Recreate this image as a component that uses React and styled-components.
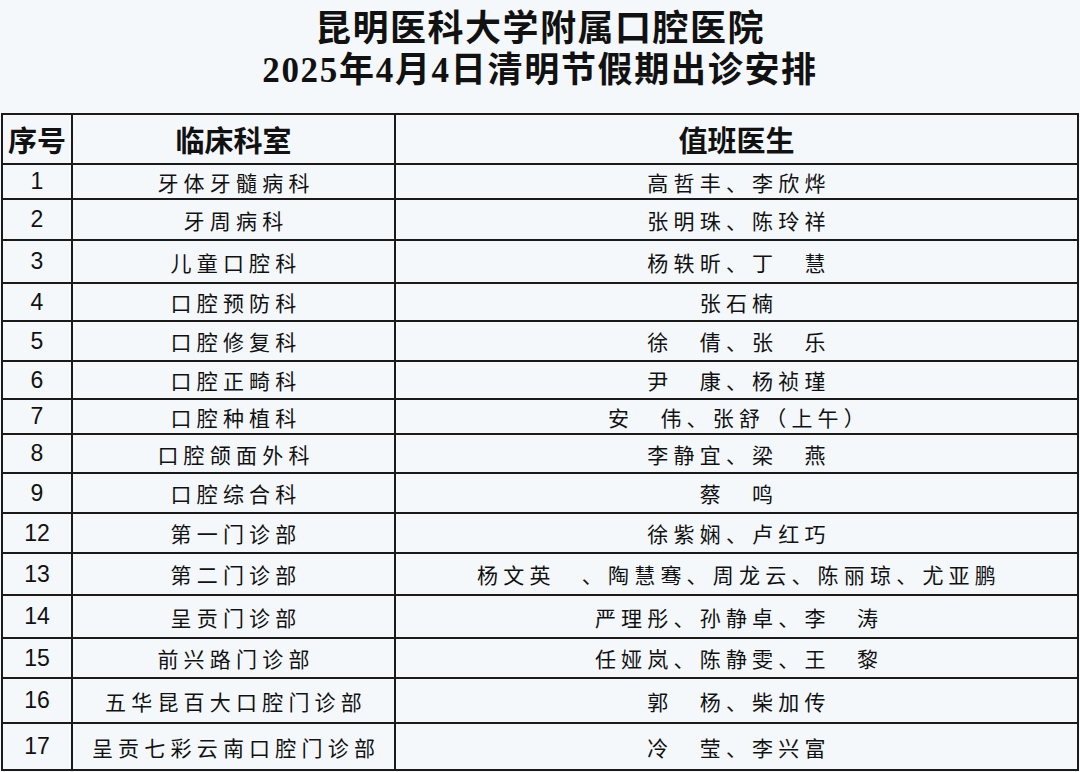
import React from "react";
import styled, { createGlobalStyle } from "styled-components";

const rows = [
  { no: "1", dept: "牙体牙髓病科", doctors: "高哲丰、李欣烨", h: 35 },
  { no: "2", dept: "牙周病科", doctors: "张明珠、陈玲祥", h: 41 },
  { no: "3", dept: "儿童口腔科", doctors: "杨轶昕、丁　慧", h: 43 },
  { no: "4", dept: "口腔预防科", doctors: "张石楠", h: 38 },
  { no: "5", dept: "口腔修复科", doctors: "徐　倩、张　乐", h: 40 },
  { no: "6", dept: "口腔正畸科", doctors: "尹　康、杨祯瑾", h: 38 },
  { no: "7", dept: "口腔种植科", doctors: "安　伟、张舒（上午）", h: 35 },
  { no: "8", dept: "口腔颌面外科", doctors: "李静宜、梁　燕", h: 39 },
  { no: "9", dept: "口腔综合科", doctors: "蔡　鸣", h: 40 },
  { no: "12", dept: "第一门诊部", doctors: "徐紫娴、卢红巧", h: 40 },
  { no: "13", dept: "第二门诊部", doctors: "杨文英　、陶慧骞、周龙云、陈丽琼、尤亚鹏", h: 42 },
  { no: "14", dept: "呈贡门诊部", doctors: "严理彤、孙静卓、李　涛", h: 43 },
  { no: "15", dept: "前兴路门诊部", doctors: "任娅岚、陈静雯、王　黎", h: 40 },
  { no: "16", dept: "五华昆百大口腔门诊部", doctors: "郭　杨、柴加传", h: 45 },
  { no: "17", dept: "呈贡七彩云南口腔门诊部", doctors: "冷　莹、李兴富", h: 47 },
];

export default function App() {
  return (
    <>
      <GlobalStyle />
      <Page>
        <Title>
          <TitleLine>昆明医科大学附属口腔医院</TitleLine>
          <TitleLine $tight>2025年4月4日清明节假期出诊安排</TitleLine>
        </Title>
        <Table>
          <colgroup>
            <col style={{ width: "70px" }} />
            <col style={{ width: "323px" }} />
            <col />
          </colgroup>
          <thead>
            <tr>
              <HeadCell>序号</HeadCell>
              <HeadCell>临床科室</HeadCell>
              <HeadCell>值班医生</HeadCell>
            </tr>
          </thead>
          <tbody>
            {rows.map((r) => (
              <tr key={r.no}>
                <NoCell style={{ height: r.h - 2 }}>{r.no}</NoCell>
                <TextCell>{r.dept}</TextCell>
                <TextCell>{r.doctors}</TextCell>
              </tr>
            ))}
          </tbody>
        </Table>
      </Page>
    </>
  );
}

const GlobalStyle = createGlobalStyle`
  html, body {
    margin: 0;
    padding: 0;
    background: #f4f8fb;
  }
`;

const Page = styled.div`
  width: 1080px;
  height: 772px;
  overflow: hidden;
  background: #f4f8fb;
  padding: 0 1px 0 1px;
  box-sizing: border-box;
`;

const Title = styled.div`
  display: flex;
  flex-direction: column;
  align-items: center;
  padding-top: 8px;
  height: 113px;
  box-sizing: border-box;
`;

const TitleLine = styled.div`
  font-family: "Liberation Serif", "Noto Sans CJK SC", serif;
  font-weight: 700;
  font-size: ${(p) => (p.$tight ? "35px" : "36px")};
  letter-spacing: ${(p) => (p.$tight ? "1.7px" : "1.5px")};
  line-height: 42px;
  color: #111;
`;

const Table = styled.table`
  width: 100%;
  border-collapse: collapse;
  table-layout: fixed;
  color: #111;
`;

const HeadCell = styled.th`
  height: 48px;
  border: 2px solid #1a1a1a;
  padding: 0;
  font-family: "Liberation Serif", "Noto Sans CJK SC", serif;
  font-weight: 700;
  font-size: 29px;
  text-align: center;
  vertical-align: middle;
`;

const NoCell = styled.td`
  border: 2px solid #1a1a1a;
  padding: 0;
  font-family: "Liberation Sans", Arial, sans-serif;
  font-size: 23px;
  text-align: center;
  vertical-align: middle;
`;

const TextCell = styled.td`
  border: 2px solid #1a1a1a;
  padding: 0 0 0 5px;
  font-family: "Noto Sans CJK SC", sans-serif;
  font-size: 21px;
  letter-spacing: 5.2px;
  text-align: center;
  vertical-align: middle;
  white-space: nowrap;
`;
